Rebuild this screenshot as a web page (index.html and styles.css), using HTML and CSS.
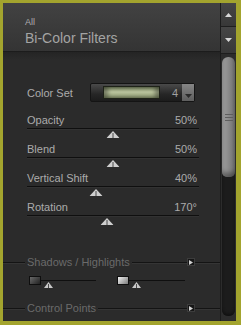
FILE: index.html
```html
<!DOCTYPE html>
<html lang="en">

<head>
    <meta charset="UTF-8">
    <meta name="viewport" content="width=device-width, initial-scale=1.0">
    <title>Bi-Color Filters</title>
    <link rel="stylesheet" href="styles.css">
</head>

<body>

    <div class="window">
        <div class="panel">
            <div class="head">
                <div class="crumb">All</div>
                <div class="title">Bi-Color Filters</div>
            </div>

            <div class="content">
                <div class="colorset">
                    <span class="label">Color Set</span>
                    <div class="picker">
                        <span class="swatch"></span>
                        <span class="num">4</span>
                        <span class="drop">
                            <svg width="7" height="4" viewBox="0 0 7 4"><polygon points="0,0 7,0 3.5,4" fill="#2a2a2a"/></svg>
                        </span>
                    </div>
                </div>

                <div class="slider">
                    <div class="row"><span>Opacity</span><span>50%</span></div>
                    <div class="track">
                        <svg class="thumb" style="left: 50%" width="13" height="7" viewBox="0 0 13 7"><polygon points="0,7 6.5,0 13,7" fill="#cfcfcf"/><line x1="6.5" y1="2" x2="6.5" y2="7" stroke="#4a4a4a"/></svg>
                    </div>
                </div>
                <div class="slider">
                    <div class="row"><span>Blend</span><span>50%</span></div>
                    <div class="track">
                        <svg class="thumb" style="left: 50%" width="13" height="7" viewBox="0 0 13 7"><polygon points="0,7 6.5,0 13,7" fill="#cfcfcf"/><line x1="6.5" y1="2" x2="6.5" y2="7" stroke="#4a4a4a"/></svg>
                    </div>
                </div>
                <div class="slider">
                    <div class="row"><span>Vertical Shift</span><span>40%</span></div>
                    <div class="track">
                        <svg class="thumb" style="left: 40%" width="13" height="7" viewBox="0 0 13 7"><polygon points="0,7 6.5,0 13,7" fill="#cfcfcf"/><line x1="6.5" y1="2" x2="6.5" y2="7" stroke="#4a4a4a"/></svg>
                    </div>
                </div>
                <div class="slider">
                    <div class="row"><span>Rotation</span><span>170°</span></div>
                    <div class="track">
                        <svg class="thumb" style="left: 46.5%" width="13" height="7" viewBox="0 0 13 7"><polygon points="0,7 6.5,0 13,7" fill="#cfcfcf"/><line x1="6.5" y1="2" x2="6.5" y2="7" stroke="#4a4a4a"/></svg>
                    </div>
                </div>

                <div class="section">
                    <span class="name">Shadows / Highlights</span>
                    <span class="rule"></span>
                    <span class="more">
                        <svg width="4" height="5" viewBox="0 0 4 5"><polygon points="0,0 4,2.5 0,5" fill="#d0d0d0"/></svg>
                    </span>
                </div>

                <div class="tones">
                    <div class="tone">
                        <span class="chip dark"></span>
                        <div class="mini">
                            <svg class="mini-thumb" width="9" height="6" viewBox="0 0 9 6"><polygon points="0,6 4.5,0 9,6" fill="#c8c8c8"/><line x1="4.5" y1="2" x2="4.5" y2="6" stroke="#4a4a4a"/></svg>
                        </div>
                    </div>
                    <div class="tone">
                        <span class="chip light"></span>
                        <div class="mini">
                            <svg class="mini-thumb" width="9" height="6" viewBox="0 0 9 6"><polygon points="0,6 4.5,0 9,6" fill="#c8c8c8"/><line x1="4.5" y1="2" x2="4.5" y2="6" stroke="#4a4a4a"/></svg>
                        </div>
                    </div>
                </div>

                <div class="section last">
                    <span class="name">Control Points</span>
                    <span class="rule"></span>
                    <span class="more">
                        <svg width="4" height="5" viewBox="0 0 4 5"><polygon points="0,0 4,2.5 0,5" fill="#d0d0d0"/></svg>
                    </span>
                </div>
            </div>
        </div>

        <div class="scrollbar">
            <div class="arrow up">
                <svg width="7" height="4" viewBox="0 0 7 4"><polygon points="0,4 3.5,0 7,4" fill="#d8d8d8"/></svg>
            </div>
            <div class="arrow down">
                <svg width="7" height="4" viewBox="0 0 7 4"><polygon points="0,0 7,0 3.5,4" fill="#d8d8d8"/></svg>
            </div>
            <div class="slot">
                <div class="channel">
                    <div class="grip">
                        <span></span><span></span><span></span>
                    </div>
                </div>
            </div>
        </div>
    </div>

</body>

</html>
```

FILE: styles.css
```css
body {
    font-family: "Liberation Sans", Arial, sans-serif;
    margin: 0;
    height: 325px;
    box-sizing: border-box;
    padding: 3px 5px 4px 3px;
    background-color: #a3a42e;
    overflow: hidden;
}

.window {
    display: flex;
    width: 233px;
    height: 318px;
    background-color: #2b2b2b;
    overflow: hidden;
}

.panel {
    flex: 1;
    min-width: 0;
}

.head {
    height: 49px;
    box-sizing: border-box;
    padding: 14px 0 0 22px;
    background: linear-gradient(#424242, #343434);
    border-bottom: 1px solid #1c1c1c;
    box-shadow: 0 1px 0 #262626;
}

.crumb {
    font-size: 9px;
    line-height: 10px;
    color: #b0b0b0;
    margin-bottom: 3px;
}

.title {
    font-size: 14px;
    line-height: 16px;
    color: #a4a4a4;
}

.content {
    padding: 31px 21px 0 24px;
    background: linear-gradient(#242424, #2b2b2b 8px);
}

.label,
.row {
    font-size: 11px;
    line-height: 16px;
    color: #ababab;
}

.colorset {
    display: flex;
    align-items: center;
    height: 19px;
}

.colorset .label {
    width: 63px;
}

.picker {
    display: flex;
    align-items: center;
    width: 105px;
    height: 19px;
    box-sizing: border-box;
    border: 1px solid #141414;
    border-radius: 2px;
    background: linear-gradient(#4a4a4a, #262626 60%, #1c1c1c);
}

.swatch {
    width: 57px;
    height: 13px;
    margin-left: 12px;
    box-sizing: border-box;
    border: 1px solid #1e2218;
    background: linear-gradient(#7f8c66, #b9c39d 45%, #95a277);
    box-shadow: inset 4px 0 4px rgba(0, 0, 0, 0.35), inset -4px 0 4px rgba(0, 0, 0, 0.35);
}

.num {
    flex: 1;
    font-size: 11px;
    color: #a0a0a0;
    text-align: right;
    padding-right: 4px;
}

.drop {
    display: flex;
    align-items: flex-end;
    justify-content: center;
    width: 12px;
    height: 17px;
    box-sizing: border-box;
    padding-bottom: 3px;
    background: linear-gradient(#858585, #5e5e5e);
}

.colorset + .slider {
    margin-top: 10px;
}

.row {
    display: flex;
    justify-content: space-between;
    padding-right: 2px;
}

.track {
    position: relative;
    height: 12px;
    border-top: 1px solid #0f0f0f;
    background: linear-gradient(#393939, #2b2b2b 1px);
}

.thumb {
    position: absolute;
    top: 2px;
    transform: translateX(-50%);
}

.section {
    display: flex;
    align-items: center;
    height: 14px;
    margin: 27px -21px 0 -24px;
}

.section::before,
.section::after,
.rule {
    height: 1px;
    background-color: #141414;
    box-shadow: 0 1px 0 #353535;
}

.section::before {
    content: "";
    width: 22px;
}

.section::after {
    content: "";
    width: 25px;
}

.section.last {
    margin-top: 12px;
}

.name {
    font-size: 11px;
    color: #6a6a6a;
    padding: 0 2px;
}

.rule {
    flex: 1;
}

.more {
    display: flex;
    align-items: center;
    justify-content: center;
    width: 8px;
    height: 8px;
    box-sizing: border-box;
    border: 1px solid #3c3c3c;
    background-color: #161616;
}

.tones {
    display: flex;
    margin-top: 7px;
    height: 13px;
}

.tone {
    display: flex;
    width: 67px;
    margin-left: 2px;
}

.tone + .tone {
    width: 68px;
    margin-left: 21px;
}

.chip {
    width: 12px;
    height: 9px;
    box-sizing: border-box;
    border: 1px solid #0e0e0e;
}

.chip.dark {
    background: linear-gradient(135deg, #6a6a6a, #202020);
}

.chip.light {
    background: linear-gradient(135deg, #f2f2f2, #7a7a7a);
}

.mini {
    position: relative;
    flex: 1;
    margin-top: 4px;
    height: 8px;
    border-top: 1px solid #0f0f0f;
}

.mini-thumb {
    position: absolute;
    top: 1px;
    left: 3px;
}

.scrollbar {
    display: flex;
    flex-direction: column;
    width: 16px;
    border-left: 1px solid #1c1c1c;
    box-sizing: border-box;
}

.arrow {
    display: flex;
    align-items: center;
    justify-content: center;
    background: linear-gradient(#454545, #383838);
    border-bottom: 1px solid #1e1e1e;
}

.arrow.up {
    height: 23px;
}

.arrow.down {
    height: 26px;
}

.slot {
    flex: 1;
    padding: 3px 1px 5px 1px;
    background-color: #2c2c2c;
}

.channel {
    height: 100%;
    border-radius: 6px;
    background-color: #1c1c1c;
    box-shadow: inset 0 -2px 3px #111;
}

.grip {
    display: flex;
    flex-direction: column;
    align-items: center;
    justify-content: center;
    gap: 2px;
    height: 120px;
    border-radius: 6px 6px 5px 5px;
    background: linear-gradient(90deg, #a4a4a4, #8a8a8a 50%, #727272);
    box-shadow: inset 0 -4px 4px rgba(0, 0, 0, 0.35);
}

.grip span {
    width: 8px;
    height: 1px;
    background-color: #5e5e5e;
}
```
